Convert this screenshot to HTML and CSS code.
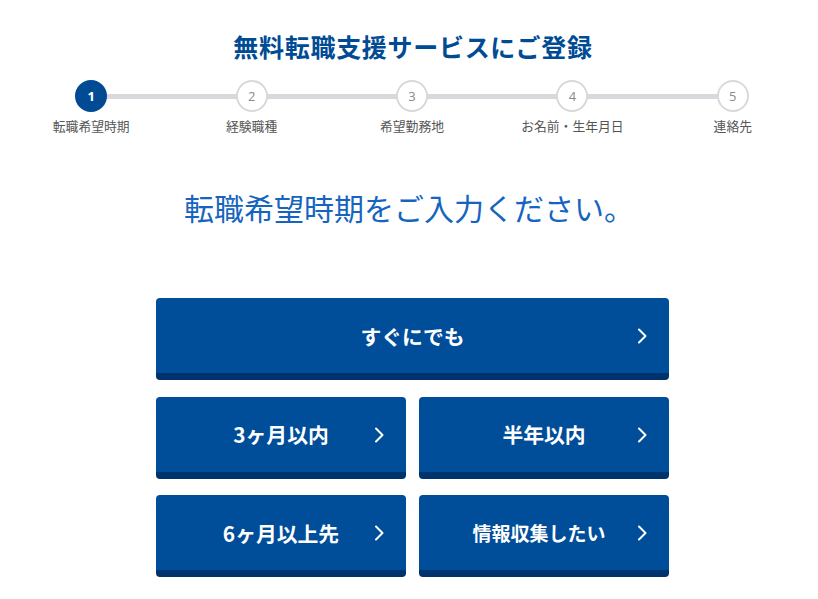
FILE: index.html
```html
<!DOCTYPE html>
<html lang="ja">
<head>
<meta charset="utf-8">
<title>無料転職支援サービスにご登録</title>
<link rel="stylesheet" href="styles.css">
</head>
<body>
<div class="page">
  <h1 class="title">無料転職支援サービスにご登録</h1>
  <ol class="steps">
    <li class="step active"><span class="circle">1</span><span class="label">転職希望時期</span></li>
    <li class="step"><span class="circle">2</span><span class="label">経験職種</span></li>
    <li class="step"><span class="circle">3</span><span class="label">希望勤務地</span></li>
    <li class="step"><span class="circle">4</span><span class="label">お名前・生年月日</span></li>
    <li class="step"><span class="circle">5</span><span class="label">連絡先</span></li>
  </ol>
  <h2 class="question">転職希望時期をご入力ください。</h2>
  <div class="options">
    <button class="opt wide"><span class="txt">すぐにでも</span><svg class="chev" viewBox="0 0 10 16" width="10" height="16"><polyline points="2,1.5 8.5,8 2,14.5" /></svg></button>
    <button class="opt"><span class="txt">3ヶ月以内</span><svg class="chev" viewBox="0 0 10 16" width="10" height="16"><polyline points="2,1.5 8.5,8 2,14.5" /></svg></button>
    <button class="opt"><span class="txt">半年以内</span><svg class="chev" viewBox="0 0 10 16" width="10" height="16"><polyline points="2,1.5 8.5,8 2,14.5" /></svg></button>
    <button class="opt"><span class="txt">6ヶ月以上先</span><svg class="chev" viewBox="0 0 10 16" width="10" height="16"><polyline points="2,1.5 8.5,8 2,14.5" /></svg></button>
    <button class="opt long"><span class="txt">情報収集したい</span><svg class="chev" viewBox="0 0 10 16" width="10" height="16"><polyline points="2,1.5 8.5,8 2,14.5" /></svg></button>
  </div>
</div>
</body>
</html>
```

FILE: styles.css
```css
* { box-sizing: border-box; }
html, body { margin: 0; padding: 0; background: #fff; }
body {
  font-family: "Noto Sans CJK JP", "Noto Sans", sans-serif;
  color: #333;
}
.page {
  width: 818px;
  padding-top: 28px;
}
.title {
  margin: 0;
  padding-left: 8px;
  text-align: center;
  font-size: 25px;
  line-height: 36px;
  font-weight: 700;
  color: #004b93;
  letter-spacing: 0.7px;
}
.steps {
  list-style: none;
  margin: 16px 0 0 11px;
  padding: 0;
  width: 802px;
  display: grid;
  grid-template-columns: repeat(5, 1fr);
  position: relative;
}
.steps::before {
  content: "";
  position: absolute;
  left: 80px;
  right: 80px;
  top: 14px;
  height: 5px;
  background: #d9d9dd;
}
.step {
  display: flex;
  flex-direction: column;
  align-items: center;
  position: relative;
}
.circle {
  width: 32px;
  height: 32px;
  border-radius: 50%;
  border: 2px solid #d9d9dd;
  background: #fff;
  color: #8a8a8a;
  font-size: 13px;
  line-height: 28px;
  text-align: center;
  font-family: "Open Sans", "Noto Sans", sans-serif;
}
.step.active .circle {
  background: #004b93;
  border-color: #004b93;
  color: #fff;
  font-weight: 700;
}
.label {
  margin-top: 6px;
  font-size: 12.8px;
  line-height: 16px;
  color: #555;
  white-space: nowrap;
}
.question {
  margin: 53px 0 0;
  text-align: center;
  font-size: 30px;
  line-height: 40px;
  font-weight: 400;
  color: #1565c0;
}
.options {
  width: 513px;
  margin: 71px 0 0 156px;
  display: grid;
  grid-template-columns: 1fr 1fr;
  column-gap: 13px;
  row-gap: 16.5px;
}
.opt {
  position: relative;
  height: 82px;
  border: none;
  border-bottom: 7px solid #00336d;
  border-radius: 4px;
  background: #004d99;
  color: #fff;
  font-family: "Noto Sans CJK JP", "Noto Sans", sans-serif;
  font-size: 20.8px;
  font-weight: 700;
  display: flex;
  align-items: center;
  justify-content: center;
  padding: 0;
  cursor: pointer;
}
.opt.wide { grid-column: 1 / 3; }
.opt.long { font-size: 19px; padding-right: 10px; }
.opt .chev {
  position: absolute;
  right: 22px;
  top: 30px;
}
.chev polyline {
  fill: none;
  stroke: #fff;
  stroke-width: 2;
  stroke-linecap: round;
  stroke-linejoin: round;
}
```
